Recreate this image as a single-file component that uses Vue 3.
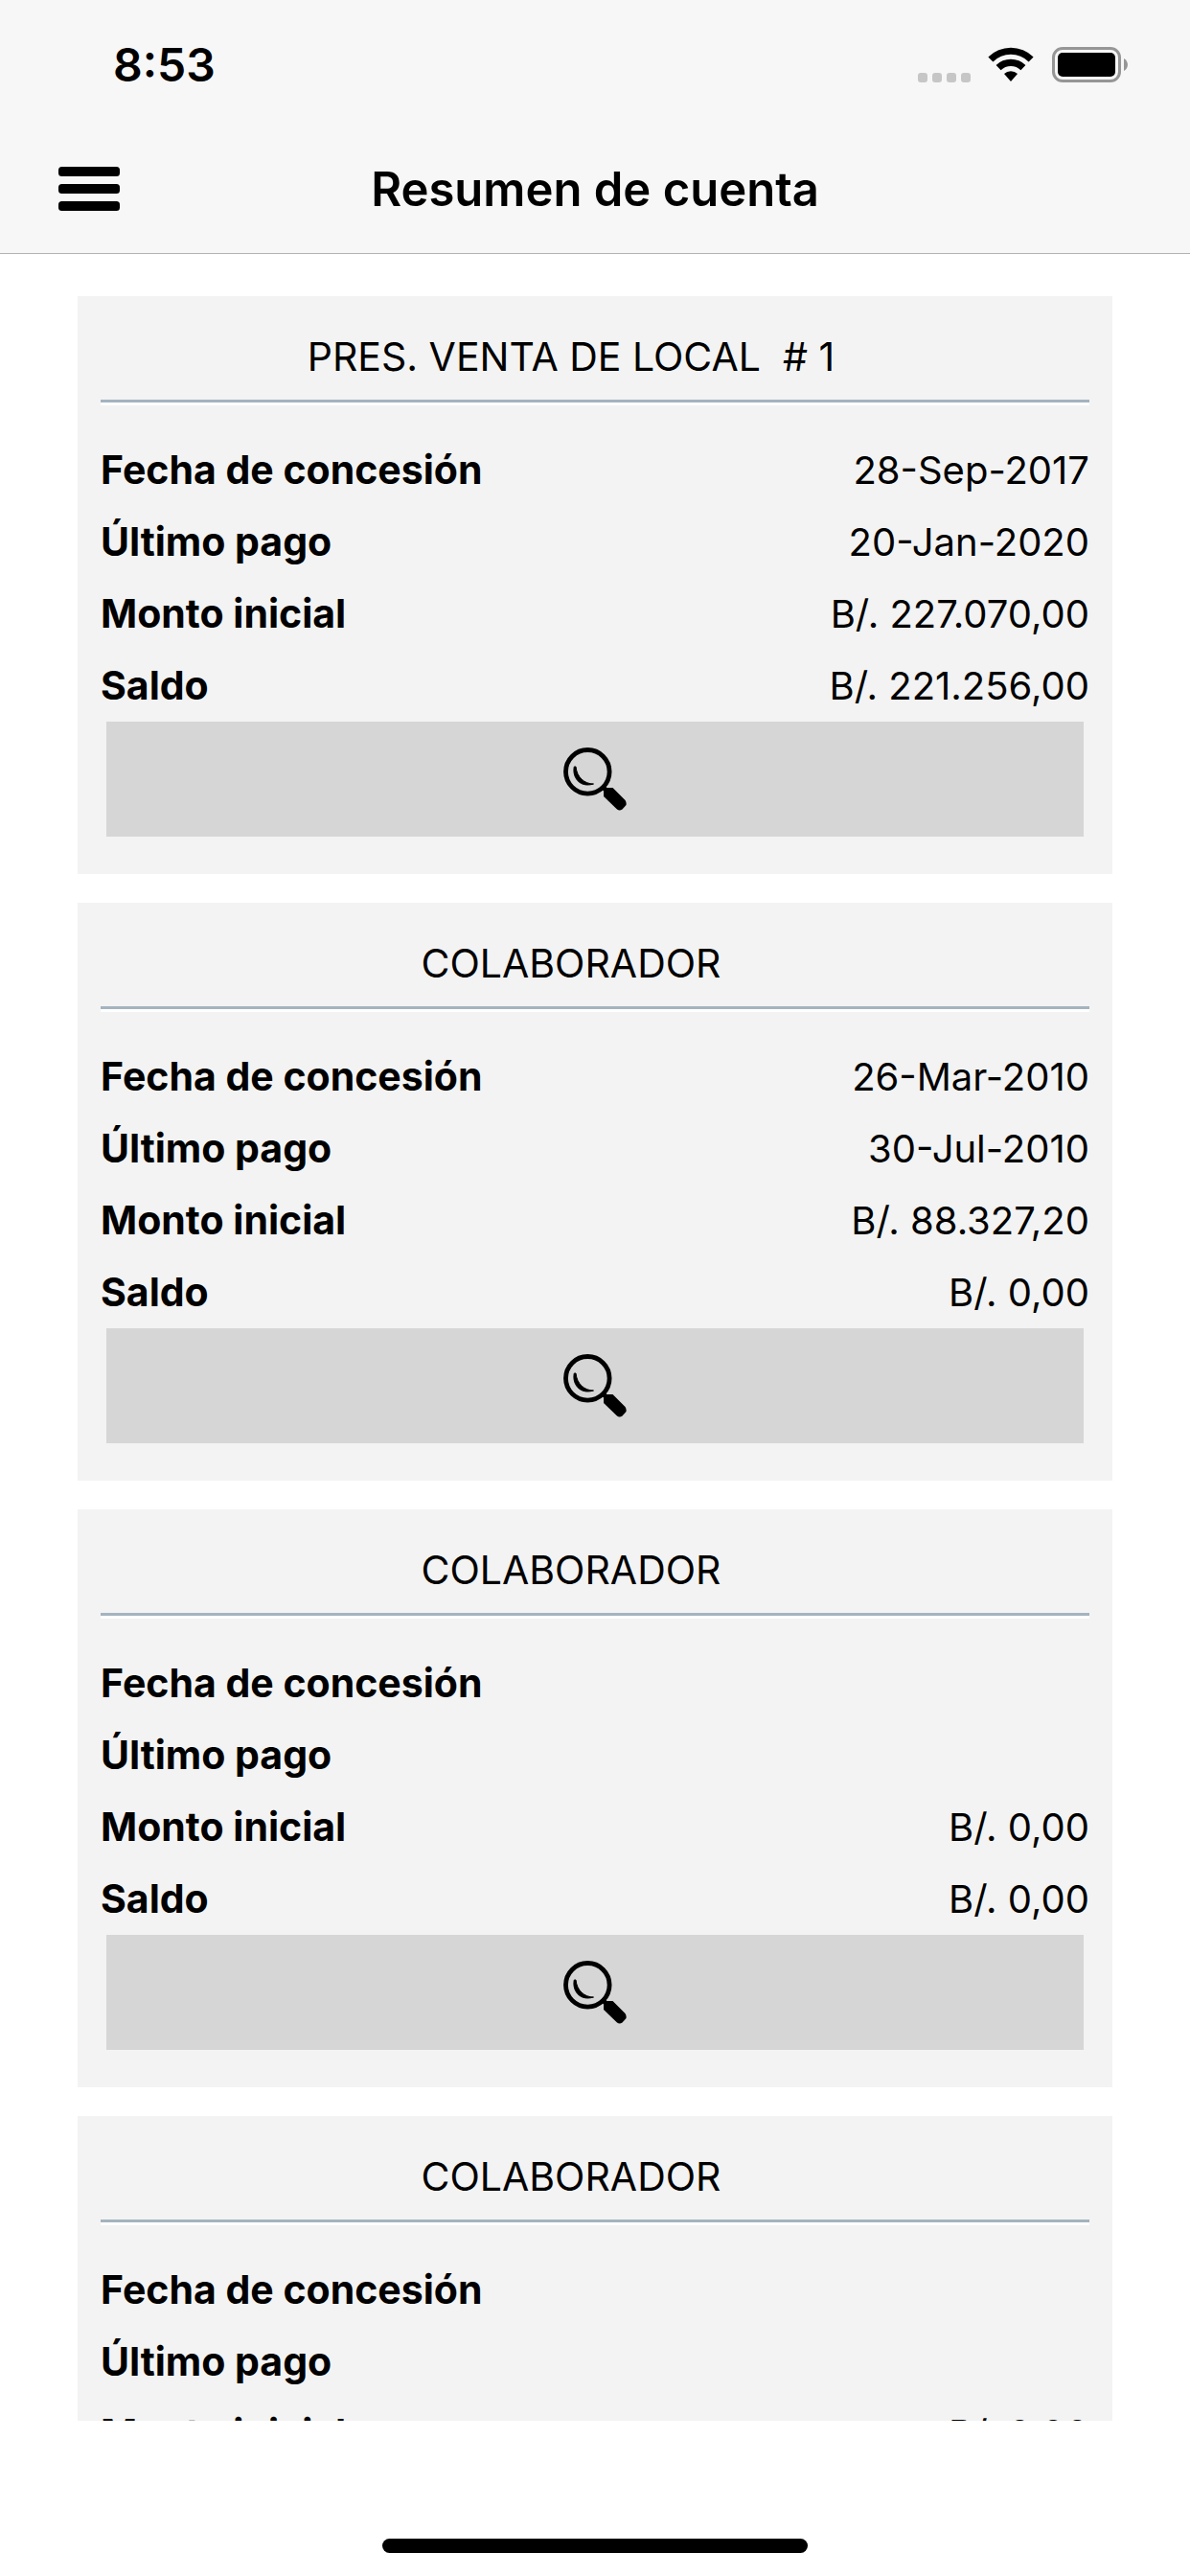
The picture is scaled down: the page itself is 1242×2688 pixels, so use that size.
<script setup>
const signalDots = 4

const accounts = [
  {
    id: 1,
    title: 'PRES. VENTA DE LOCAL  # 1',
    granted: '28-Sep-2017',
    lastPayment: '20-Jan-2020',
    initial: 'B/. 227.070,00',
    balance: 'B/. 221.256,00'
  },
  {
    id: 2,
    title: 'COLABORADOR',
    granted: '26-Mar-2010',
    lastPayment: '30-Jul-2010',
    initial: 'B/. 88.327,20',
    balance: 'B/. 0,00'
  },
  { id: 3, title: 'COLABORADOR', granted: '', lastPayment: '', initial: 'B/. 0,00', balance: 'B/. 0,00' },
  { id: 4, title: 'COLABORADOR', granted: '', lastPayment: '', initial: 'B/. 0,00', balance: 'B/. 0,00' }
]

const fields = [
  { key: 'granted', label: 'Fecha de concesión' },
  { key: 'lastPayment', label: 'Último pago' },
  { key: 'initial', label: 'Monto inicial' },
  { key: 'balance', label: 'Saldo' }
]
</script>

<template>
  <div class="screen">
    <header class="top">
      <div class="status">
        <time class="clock">8:53</time>
        <div class="indicators">
          <span class="signal">
            <i v-for="n in signalDots" :key="n" class="dot"></i>
          </span>
          <svg class="wifi" width="48" height="37" viewBox="0 0 48 37" aria-hidden="true">
            <path d="M0.4 10.4 A33.5 33.5 0 0 1 47.6 10.4 L42.6 15.5 A26.4 26.4 0 0 0 5.4 15.5 Z" />
            <path d="M8.6 19 A21.8 21.8 0 0 1 39.4 19 L34.4 24.3 A14.6 14.6 0 0 0 13.6 24.3 Z" />
            <path d="M17 28 A10 10 0 0 1 31 28 L24 36 Z" />
          </svg>
          <svg class="battery" width="80" height="37" viewBox="0 0 80 37" aria-hidden="true">
            <rect x="1.5" y="1.5" width="69" height="34" rx="9.5" fill="none" stroke="#969696" stroke-width="3" />
            <rect x="6" y="6" width="60" height="25" rx="5" />
            <path d="M75 12 C80.3 15 80.3 22 75 25 Z" fill="#969696" />
          </svg>
        </div>
      </div>
      <div class="nav">
        <button class="menu" type="button" aria-label="Menú">
          <svg width="64" height="46" viewBox="0 0 64 46" aria-hidden="true">
            <rect width="64" height="10" rx="3.5" />
            <rect y="18" width="64" height="10" rx="3.5" />
            <rect y="36" width="64" height="10" rx="3.5" />
          </svg>
        </button>
        <h1 class="heading">Resumen de cuenta</h1>
      </div>
    </header>

    <main class="list">
      <article v-for="account in accounts" :key="account.id" class="card">
        <h2 class="title">{{ account.title }}</h2>
        <dl class="fields">
          <div v-for="field in fields" :key="field.key" class="row">
            <dt>{{ field.label }}</dt>
            <dd>{{ account[field.key] }}</dd>
          </div>
        </dl>
        <button class="detail" type="button" aria-label="Ver detalle">
          <svg width="66" height="66" viewBox="0 0 66 66" aria-hidden="true">
            <circle cx="25.3" cy="25.3" r="22.8" fill="none" stroke="#000" stroke-width="4.8" />
            <path d="M40 40 L46 46" stroke="#000" stroke-width="5" />
            <path d="M11.3 20 C9 31 17 42.5 31.5 38 C22 38 14 31 13 20 Z" stroke="#000" stroke-width="1" />
            <path d="M42 44.5 Q44 42 46.5 42 L51.5 42 L64.5 55 Q66 57 65.5 60 L61.5 64.5 Q58.5 66.5 56 64.5 L42 51 Z" />
          </svg>
        </button>
      </article>
    </main>

    <footer class="home">
      <span class="home-bar"></span>
    </footer>
  </div>
</template>

<style>
body {
  margin: 0;
  background: #fff;
}
</style>

<style scoped>
.screen {
  display: flex;
  flex-direction: column;
  height: 100vh;
  color: #000;
  background: #fff;
  font-family: Inter, "Liberation Sans", sans-serif;
  font-size: 41px;
}

.top {
  flex: none;
  background: #f7f7f7;
  border-bottom: 1px solid #b2b2b2;
}

.status {
  display: flex;
  align-items: center;
  justify-content: space-between;
  box-sizing: border-box;
  height: 132px;
  padding: 2px 64px 0 118px;
}

.clock {
  font-size: 48px;
  font-weight: 600;
}

.indicators {
  display: flex;
  align-items: flex-end;
}

.signal {
  display: flex;
  gap: 5px;
  margin-right: 18px;
}

.dot {
  width: 10px;
  height: 10px;
  border-radius: 3px;
  background: #c6c6c6;
}

.wifi {
  margin-right: 19px;
}

.nav {
  display: grid;
  grid-template-columns: 64px 1fr 64px;
  align-items: center;
  height: 130px;
  padding: 0 61px 2px;
}

.menu {
  display: flex;
  padding: 0;
  border: 0;
  background: none;
}

.heading {
  margin: 0;
  text-align: center;
  font-size: 49px;
  font-weight: 600;
}

.list {
  display: flex;
  flex: 1;
  flex-direction: column;
  gap: 30px;
  min-height: 0;
  padding: 44px 81px 0;
  overflow-y: auto;
  scrollbar-width: none;
}

.card {
  flex: none;
  padding: 0 24px 39px;
  background: #f3f3f3;
}

.title {
  margin: 0;
  padding: 36px 50px 18px 0;
  border-bottom: 3px solid #a4b3bf;
  box-shadow: 0 3px #fff;
  text-align: center;
  font-size: 41px;
  font-weight: 400;
  line-height: 54px;
  white-space: pre;
}

.fields {
  margin: 0;
  padding-top: 33px;
}

.row {
  display: flex;
  justify-content: space-between;
  line-height: 75px;
}

dt {
  font-weight: 700;
}

dd {
  margin: 0;
  font-size: 40px;
}

.detail {
  display: flex;
  align-items: center;
  justify-content: center;
  width: calc(100% - 12px);
  height: 120px;
  margin: 0 6px;
  padding: 0;
  border: 0;
  background: #d6d6d6;
}

.home {
  display: flex;
  flex: none;
  justify-content: center;
  align-items: flex-end;
  box-sizing: border-box;
  height: 162px;
  padding-bottom: 24px;
}

.home-bar {
  width: 444px;
  height: 15px;
  border-radius: 8px;
  background: #000;
}
</style>
